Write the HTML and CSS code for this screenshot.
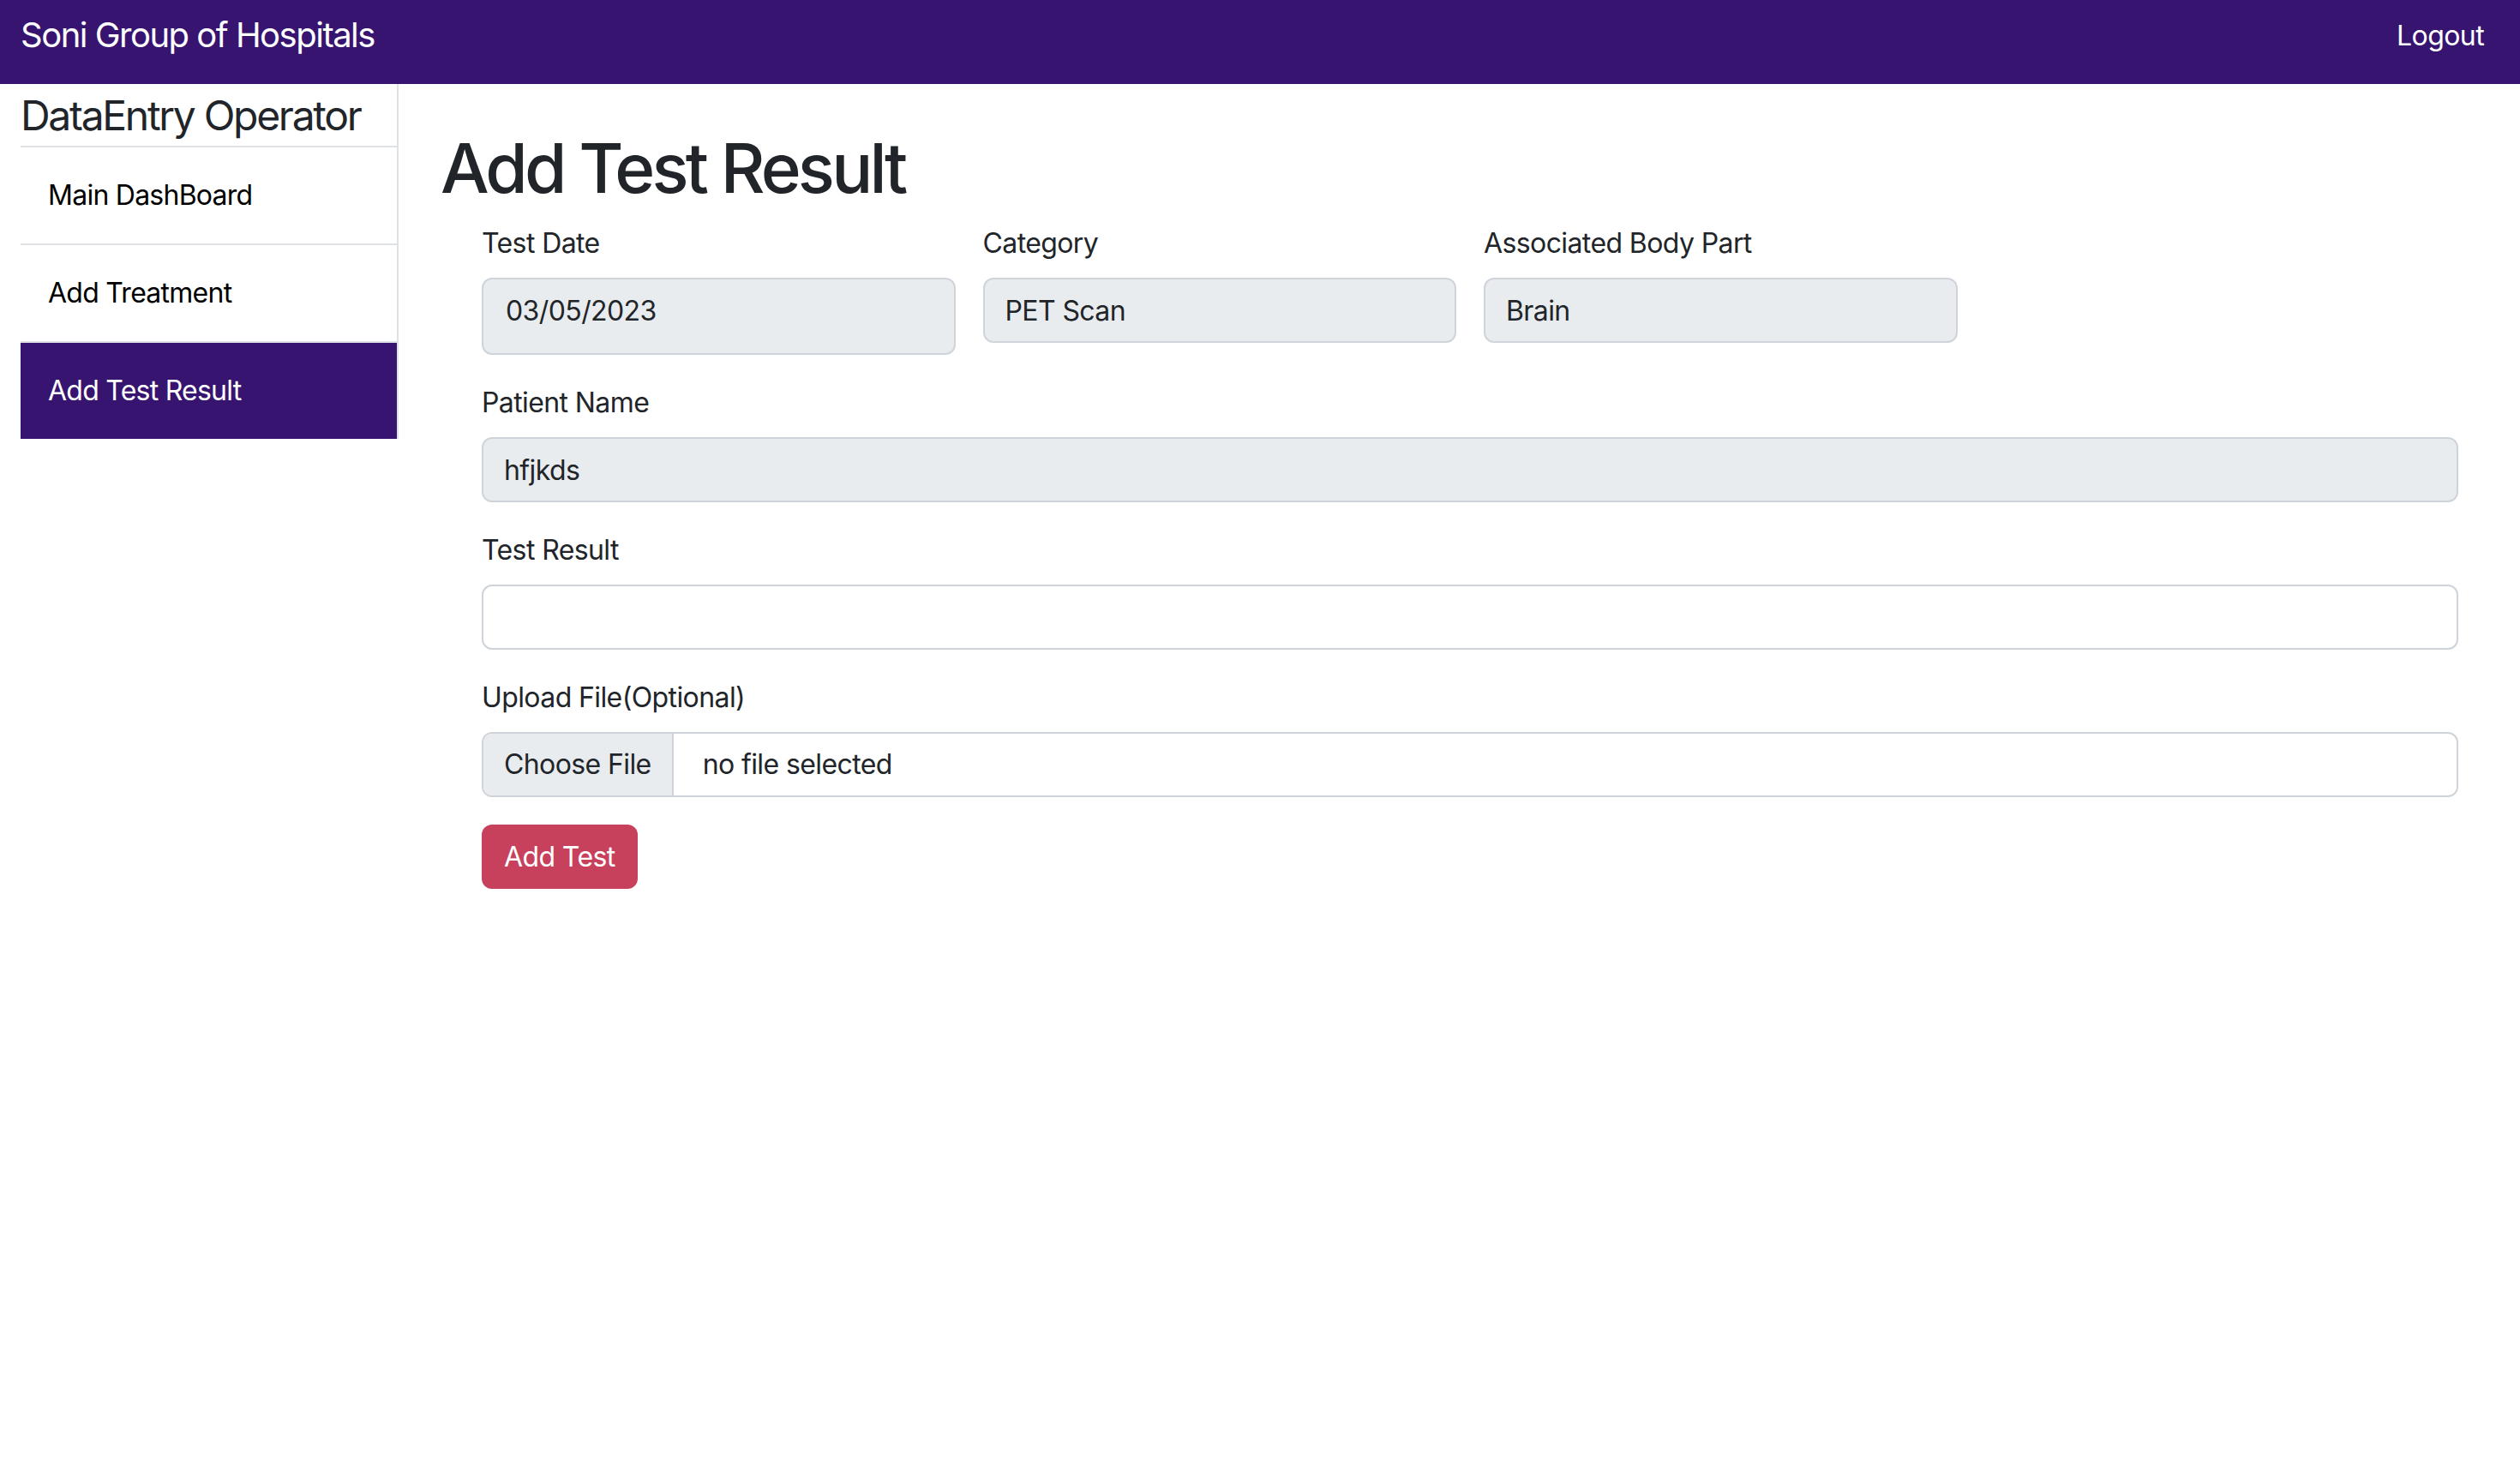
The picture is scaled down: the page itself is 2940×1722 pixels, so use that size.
FILE: index.html
```html
<!DOCTYPE html>
<html lang="en">
<head>
<meta charset="utf-8">
<title>Add Test Result</title>
<link rel="stylesheet" href="styles.css">
</head>
<body>
<header class="topbar">
  <a class="brand" href="#">Soni Group of Hospitals</a>
  <a class="logout" href="#">Logout</a>
</header>
<div class="layout">
  <aside class="sidebar">
    <div class="sidebar-box">
      <h4 class="sidebar-title">DataEntry Operator</h4>
      <nav class="menu">
        <a class="menu-item" href="#">Main DashBoard</a>
        <a class="menu-item" href="#">Add Treatment</a>
        <a class="menu-item active" href="#">Add Test Result</a>
      </nav>
    </div>
  </aside>
  <main class="content">
    <h1 class="page-title">Add Test Result</h1>
    <form class="form">
      <div class="grid4">
        <div class="field">
          <label class="label">Test Date</label>
          <input class="control readonly date" type="text" value="03/05/2023" readonly>
        </div>
        <div class="field">
          <label class="label">Category</label>
          <input class="control readonly" type="text" value="PET Scan" readonly>
        </div>
        <div class="field">
          <label class="label">Associated Body Part</label>
          <input class="control readonly" type="text" value="Brain" readonly>
        </div>
      </div>
      <div class="field">
        <label class="label">Patient Name</label>
        <input class="control readonly" type="text" value="hfjkds" readonly>
      </div>
      <div class="field">
        <label class="label">Test Result</label>
        <input class="control" type="text" value="">
      </div>
      <div class="field">
        <label class="label">Upload File(Optional)</label>
        <div class="file-control">
          <span class="file-button">Choose File</span>
          <span class="file-name">no file selected</span>
        </div>
      </div>
      <button class="submit" type="button">Add Test</button>
    </form>
  </main>
</div>
</body>
</html>
```

FILE: styles.css
```css
* {
  box-sizing: border-box;
}

html, body {
  margin: 0;
  padding: 0;
  background: #ffffff;
}

body {
  font-family: Inter, "Noto Sans", sans-serif;
  color: #212529;
  font-size: 32px;
  line-height: 48px;
}

a {
  text-decoration: none;
}

/* Top bar */
.topbar {
  height: 98px;
  background: #37146f;
  display: flex;
  justify-content: space-between;
  align-items: flex-start;
  padding: 0 42px 0 24px;
}

.brand {
  color: #ffffff;
  font-size: 40px;
  line-height: 60px;
  margin-top: 11px;
  letter-spacing: -1.5px;
}

.logout {
  color: #ffffff;
  font-size: 32px;
  line-height: 48px;
  margin-top: 18px;
  letter-spacing: -0.6px;
}

/* Layout */
.layout {
  display: flex;
  align-items: flex-start;
}

.sidebar {
  width: 489px;
  flex: none;
  padding: 0 24px;
}

.sidebar-box {
  border-right: 2px solid #dee2e6;
  padding-top: 8px;
}

.sidebar-title {
  margin: 0;
  font-size: 48px;
  line-height: 58px;
  font-weight: 400;
  color: #212529;
  padding-bottom: 6px;
  border-bottom: 2px solid #dee2e6;
  letter-spacing: -2.3px;
  white-space: nowrap;
}

.menu {
  display: flex;
  flex-direction: column;
}

.menu-item {
  display: block;
  padding: 32px 32px;
  font-size: 32px;
  line-height: 48px;
  color: #000000;
  border-bottom: 2px solid #dee2e6;
  letter-spacing: -0.75px;
}

.menu-item.active {
  background: #37146f;
  color: #ffffff;
  border-bottom: none;
}

/* Content */
.content {
  flex: 1;
  min-width: 0;
  padding: 50px 24px 0 25px;
}

.page-title {
  margin: 0 0 16px;
  font-size: 80px;
  line-height: 96px;
  font-weight: 500;
  color: #212529;
  letter-spacing: -3.8px;
}

.form {
  margin: 0 48px;
}

.grid4 {
  display: grid;
  grid-template-columns: repeat(4, 1fr);
  column-gap: 32px;
  align-items: start;
  margin-bottom: 32px;
}

.grid4 .field {
  margin-bottom: 0;
}

.field {
  margin-bottom: 32px;
}

.label {
  display: block;
  font-size: 32px;
  line-height: 48px;
  margin-bottom: 16px;
  color: #212529;
  letter-spacing: -0.6px;
}

.control {
  display: block;
  width: 100%;
  height: 76px;
  padding: 0 24px;
  font-family: Inter, "Noto Sans", sans-serif;
  font-size: 32px;
  color: #212529;
  background: #ffffff;
  border: 2px solid #ced4da;
  border-radius: 12px;
  outline: none;
  letter-spacing: -0.6px;
}

.control.readonly {
  background: #e9ecef;
}

.control.date {
  height: 90px;
  padding: 0 26px 14px;
}

.file-control {
  display: flex;
  align-items: center;
  height: 76px;
  border: 2px solid #ced4da;
  border-radius: 12px;
  overflow: hidden;
  letter-spacing: -0.6px;
}

.file-button {
  height: 100%;
  display: flex;
  align-items: center;
  padding: 0 24px;
  background: #e9ecef;
  border-right: 2px solid #ced4da;
  color: #212529;
}

.file-name {
  padding-left: 34px;
  color: #212529;
}

.submit {
  display: block;
  margin-top: 0;
  height: 75px;
  padding: 0 26px;
  background: #c8415c;
  color: #ffffff;
  border: none;
  border-radius: 12px;
  font-family: Inter, "Noto Sans", sans-serif;
  font-size: 32px;
  letter-spacing: -0.6px;
  cursor: pointer;
}
```
